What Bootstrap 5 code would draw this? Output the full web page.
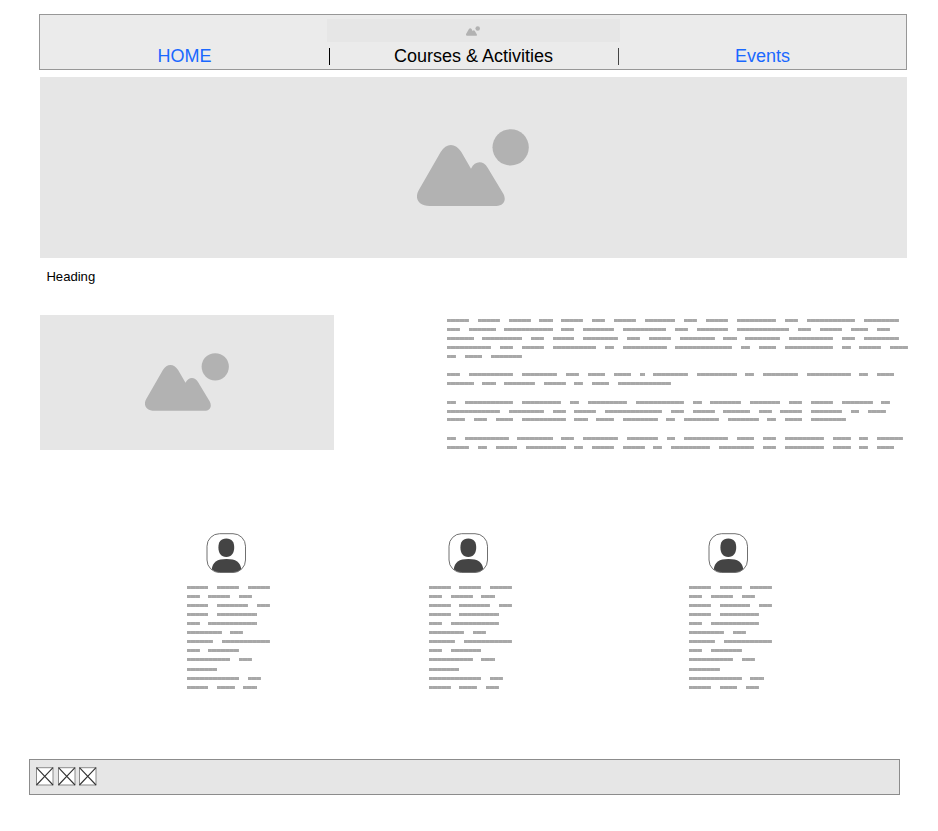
<!DOCTYPE html>
<html lang="en">
<head>
<meta charset="utf-8">
<meta name="viewport" content="width=device-width, initial-scale=1">
<title>Courses &amp; Activities</title>
<link href="https://cdn.jsdelivr.net/npm/bootstrap@5.3.0/dist/css/bootstrap.min.css" rel="stylesheet">
<style>
  body { font-family: "Liberation Sans", Arial, sans-serif; color: #000; background: #fff; }
  .page { width: 868px; margin-left: 39px; padding-top: 14px; }
  .site-nav { height: 56px; background: #ebebeb; border: 1px solid #979797; padding: 4px 0 0; }
  .logo-strip { width: 293px; height: 23px; background: #e6e6e6; padding-top: 1px; }
  .menu { height: 17px; margin-top: 6px; font-size: 18px; line-height: 17px; }
  .menu a { color: #1a68ff; text-decoration: none; }
  .menu a.active { color: #000; }
  .menu .divided { border-right: 1px solid #000; }
  .menu .divided + .divided { border-right-color: #444; }
  .menu > :first-child { width: 290px; }
  .menu > :nth-child(2) { width: 289px; padding-right: 1px; }
  .menu > :last-child { width: 287px; }
  .placeholder-box { background: #e6e6e6; }
  .hero { height: 181px; margin: 7px 0 0 1px; padding-right: .5px; }
  .pic { fill: #b2b2b2; display: block; }
  .title { font-size: 13.1px; line-height: 16px; margin: 11px 0 0 7.4px; font-weight: 400; }
  .intro { margin-top: 30px; padding-left: 1px; }
  .thumb { width: 294px; height: 135px; padding-bottom: .5px; }
  .intro-text { width: 459.700px; padding-top: 4px; }
  .greek-line { display: flex; gap: 8.77px; }
  .greek-line span { flex: none; height: 3px; background: repeating-linear-gradient(90deg, #a8a8a8 0 3.4px, #adadad 3.4px 4.385px); }
  .people { margin: 83px 0 0 147.5px; }
  .person { width: 84px; }
  .person + .person { margin-left: 158.3px; }
  .person + .person + .person { margin-left: 176.3px; }
  .avatar { display: block; margin: 0 0 12px 19px; }
  .site-footer { width: 871px; height: 36px; margin: 70px 0 0 29px; background: #e6e6e6; border: 1px solid #8c8c8c; padding: 7px 0 0 6px; gap: 3.5px; }
</style>
</head>
<body>
<svg class="d-none">
  <symbol id="landscape" viewBox="52 57 336 232">
    <path d="M90 288C55 288 44 263 57 241L123 126C140 98 167 98 185 126L214 176C226 151 251 151 264 173L311 251C321 270 313 288 290 288Z"/>
    <circle cx="333" cy="112" r="54.5"/>
  </symbol>
  <symbol id="user" viewBox="0 0 41 41">
    <path d="M5.700 36.500C6.500 29 11 26 20.500 26S34.500 29 35.300 36.500Q31.500 39.500 27 39.500H14Q9.500 39.500 5.700 36.500Z" fill="#444"/>
    <path d="M20.300 5.500C26 5.500 28.200 9 28.200 14.500C28.200 20 25.500 24 20.300 24S12.400 20 12.400 14.500C12.400 9 14.600 5.500 20.300 5.500Z" fill="#444"/>
    <rect x="1" y=".7" width="38.500" height="38.800" rx="12.500" fill="none" stroke="#707070"/>
  </symbol>
  <symbol id="crossed" viewBox="0 0 18 19">
    <rect x=".5" y=".7" width="16.500" height="17.300" fill="#fff" stroke="#8a8a8a"/>
    <path d="M.5 .7L17 18M17 .7L.5 18" stroke="#333" stroke-width="1.100"/>
  </symbol>
</svg>

<div class="page">
  <nav class="site-nav">
    <div class="logo-strip mx-auto d-flex justify-content-center align-items-center">
      <svg class="pic" width="14" height="10"><use href="#landscape"/></svg>
    </div>
    <div class="menu d-flex text-center">
      <div class="divided"><a href="#">HOME</a></div>
      <div class="divided"><a href="#" class="active">Courses &amp; Activities</a></div>
      <div><a href="#">Events</a></div>
    </div>
  </nav>

  <div class="hero placeholder-box d-flex justify-content-center align-items-center">
    <svg class="pic" width="112" height="77.300"><use href="#landscape"/></svg>
  </div>

  <h1 class="title">Heading</h1>

  <section class="intro d-flex justify-content-between">
    <div class="thumb placeholder-box d-flex justify-content-center align-items-center">
      <svg class="pic" width="84" height="58"><use href="#landscape"/></svg>
    </div>
    <div class="intro-text" data-greek="intro"></div>
  </section>

  <section class="people d-flex">
    <div class="person"><svg class="avatar" width="41" height="41"><use href="#user"/></svg><div data-greek="bio"></div></div>
    <div class="person"><svg class="avatar" width="41" height="41"><use href="#user"/></svg><div data-greek="bio"></div></div>
    <div class="person"><svg class="avatar" width="41" height="41"><use href="#user"/></svg><div data-greek="bio"></div></div>
  </section>
</div>

<footer class="site-footer d-flex">
  <svg width="18" height="19"><use href="#crossed"/></svg>
  <svg width="18" height="19"><use href="#crossed"/></svg>
  <svg width="18" height="19"><use href="#crossed"/></svg>
</footer>

<script src="https://cdn.jsdelivr.net/npm/bootstrap@5.3.0/dist/js/bootstrap.bundle.min.js"></script>
<script>
  // Each line: [line height in px, word lengths in characters]
  const UNIT = 4.385;
  const greek = {
    intro: [
      [9, [5,5,5,3,5,3,5,7,3,5,9,3,11,8]],
      [9, [3,6,11,3,7,10,3,7,12,3,5,4,3]],
      [9, [6,9,3,5,8,3,5,8,3,8,10,3,8]],
      [9, [10,3,5,10,2,10,13,2,4,11,2,5,4]],
      [18, [2,4,7]],
      [9, [3,10,8,3,4,4,1,8,9,2,8,10,2,4]],
      [19, [6,3,7,5,2,4,12]],
      [9, [2,11,9,2,9,11,2,7,7,3,5,7,2]],
      [8, [12,8,3,5,13,3,5,6,3,5,7,2,4]],
      [19, [4,3,4,10,3,4,8,2,8,7,2,4,8]],
      [9, [2,10,8,3,8,7,2,10,4,3,9,4,2,6]],
      [3, [5,2,5,9,2,5,5,2,9,8,3,9,4,2,4]]
    ],
    bio: [
      [9, [5,5,5]], [9, [3,5,3]], [9, [5,7,3]], [9, [5,9]], [9, [3,11]], [9, [8,3]],
      [9, [6,11]], [9, [3,7]], [10, [10,3]], [9, [7]], [9, [12,3]], [3, [5,4,3]]
    ]
  };
  document.querySelectorAll('[data-greek]').forEach(box => {
    box.innerHTML = greek[box.dataset.greek].map(([h, words]) =>
      `<div class="greek-line" style="height:${h}px">` +
      words.map(n => `<span style="width:${n * UNIT}px"></span>`).join('') + '</div>').join('');
  });
</script>
</body>
</html>
